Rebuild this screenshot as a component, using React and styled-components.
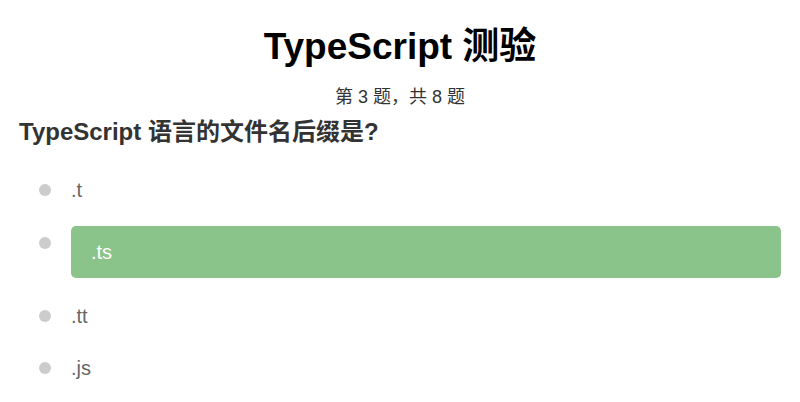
import React from 'react';
import styled, { createGlobalStyle } from 'styled-components';

const Global = createGlobalStyle`
  body {
    margin: 0;
    background: #fff;
    font-family: "Liberation Sans", Arial, "Noto Sans CJK SC", sans-serif;
  }
`;

const Page = styled.div`
  padding: 22px 19px 0;
`;

const Title = styled.h1`
  margin: 0;
  font-size: 37px;
  line-height: 50px;
  font-weight: bold;
  text-align: center;
  color: #000;
`;

const Progress = styled.p`
  margin: 13px 0 0;
  font-size: 18px;
  line-height: 24px;
  text-align: center;
  color: #333;
`;

const Question = styled.h2`
  margin: 9px 0 0;
  font-size: 24px;
  line-height: 28px;
  font-weight: bold;
  color: #333;
`;

const Options = styled.ul`
  list-style: none;
  margin: 30px 0 0;
  padding: 0 0 0 20px;
  display: flex;
  flex-direction: column;
  gap: 24px;
`;

const Option = styled.li`
  display: flex;
  align-items: flex-start;
  gap: 20px;
  margin-top: ${p => (p.$selected ? '-2px' : '0')};
`;

const Dot = styled.span`
  flex: none;
  width: 12px;
  height: 12px;
  border-radius: 50%;
  background: #ccc;
  margin-top: ${p => (p.$selected ? '11px' : '8px')};
`;

const Label = styled.span`
  flex: 1;
  font-size: 20px;
  line-height: 28px;
  color: ${p => (p.$selected ? '#fff' : '#666')};
  background: ${p => (p.$selected ? '#8bc48a' : 'transparent')};
  border-radius: 5px;
  padding: ${p => (p.$selected ? '12px 20px' : '0')};
`;

const options = ['.t', '.ts', '.tt', '.js'];
const selected = 1;

function App() {
  return (
    <Page>
      <Global />
      <Title>TypeScript 测验</Title>
      <Progress>第 3 题，共 8 题</Progress>
      <Question>TypeScript 语言的文件名后缀是?</Question>
      <Options>
        {options.map((o, i) => (
          <Option key={o} $selected={i === selected}>
            <Dot $selected={i === selected} />
            <Label $selected={i === selected}>{o}</Label>
          </Option>
        ))}
      </Options>
    </Page>
  );
}

export default App;
